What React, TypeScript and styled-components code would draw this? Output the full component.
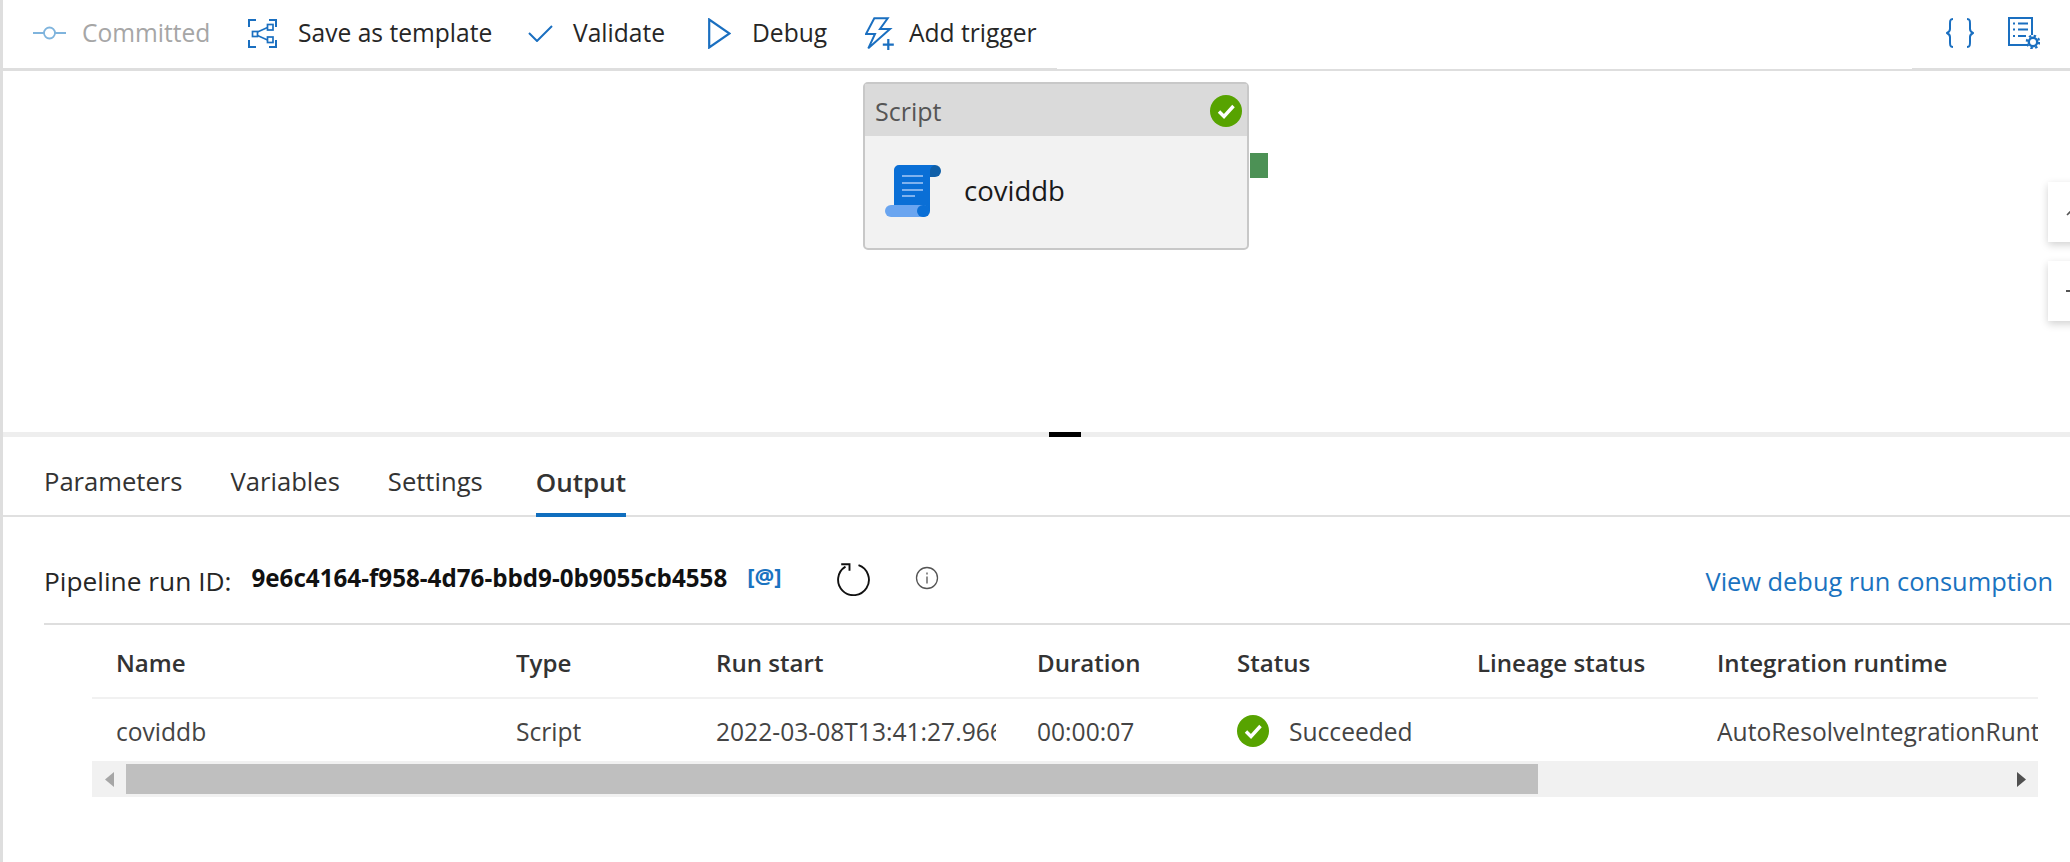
import React from "react";
import styled, { createGlobalStyle } from "styled-components";

const Global = createGlobalStyle`
  html, body { margin: 0; padding: 0; background: #fff; overflow: hidden; }
  * { box-sizing: border-box; }
  body { font-family: "Open Sans", "Noto Sans", "Liberation Sans", sans-serif; color: #262626; }
`;

const Page = styled.div`
  width: 2070px;
  height: 862px;
  display: flex;
  flex-direction: column;
  border-left: 3px solid #dedede;
  background: #fff;
`;

const Toolbar = styled.div`
  height: 71px;
  flex: none;
  display: flex;
  align-items: center;
  padding: 0 0 3px 30px;
  border-bottom: 2px solid #dedede;
  background:
    linear-gradient(#dedede, #dedede) left bottom / 1054px 1px no-repeat,
    linear-gradient(#dedede, #dedede) right bottom / 158px 1px no-repeat;
`;

const ToolButton = styled.div<{ $w: number; $gap: number }>`
  width: ${(p) => p.$w}px;
  flex: none;
  display: flex;
  align-items: center;
  gap: ${(p) => p.$gap}px;
`;

const ToolLabel = styled.span<{ $muted?: boolean }>`
  font-size: 24.6px;
  line-height: 28px;
  white-space: nowrap;
  color: ${(p) => (p.$muted ? "#a6a6a6" : "#262626")};
`;

const ToolSpacer = styled.div`
  flex: 1;
`;

const RightIcons = styled.div`
  display: flex;
  align-items: center;
  gap: 34px;
  padding-right: 30px;
`;

const Canvas = styled.div`
  position: relative;
  height: 361px;
  flex: none;
  overflow: hidden;
`;

const Node = styled.div`
  position: absolute;
  left: 860px;
  top: 11px;
  width: 386px;
  height: 168px;
  border: 2px solid #c8c8c8;
  border-radius: 5px;
  background: #f2f2f2;
  display: flex;
  flex-direction: column;
`;

const NodeHeader = styled.div`
  height: 52px;
  flex: none;
  background: #dadada;
  display: flex;
  align-items: center;
  justify-content: space-between;
  padding: 2px 5px 0 10px;
  font-size: 25px;
  color: #555;
`;

const NodeBody = styled.div`
  flex: 1;
  display: flex;
  align-items: center;
  gap: 23px;
  padding: 0 0 3px 20px;
  font-size: 27.5px;
  color: #1a1a1a;
`;

const Handle = styled.div`
  position: absolute;
  left: 1247px;
  top: 82px;
  width: 18px;
  height: 25px;
  background: #4c9155;
`;

const ZoomButton = styled.div<{ $top: number }>`
  position: absolute;
  left: 2045px;
  top: ${(p) => p.$top}px;
  width: 40px;
  height: 60px;
  background: #fff;
  box-shadow: 0 3px 8px rgba(0, 0, 0, 0.18);
  display: flex;
  align-items: center;
  padding-left: 18px;
`;

const Splitter = styled.div`
  height: 5px;
  flex: none;
  background: #eeeeee;
  display: flex;
  padding-left: 1046px;
`;

const SplitterGrip = styled.div`
  width: 32px;
  height: 5px;
  background: #000;
`;

const Tabs = styled.div`
  height: 80px;
  flex: none;
  display: flex;
  gap: 48px;
  padding-left: 41px;
  border-bottom: 2px solid #e0e0e0;
`;

const Tab = styled.div<{ $active?: boolean }>`
  height: 80px;
  padding-top: 31px;
  margin-left: ${(p) => (p.$active ? 5 : 0)}px;
  font-size: ${(p) => (p.$active ? 26 : 25.6)}px;
  line-height: 28px;
  font-weight: ${(p) => (p.$active ? 600 : 400)};
  color: #333;
  border-bottom: 4px solid ${(p) => (p.$active ? "#106ebe" : "transparent")};
`;

const RunRow = styled.div`
  height: 108px;
  flex: none;
  margin-left: 41px;
  padding: 48px 17px 0 0;
  display: flex;
  align-items: flex-start;
  border-bottom: 2px solid #dedede;
`;

const RunLabel = styled.span`
  font-size: 26.3px;
  line-height: 32px;
  white-space: nowrap;
  margin-right: 20px;
`;

const RunId = styled.span`
  font-size: 24.2px;
  line-height: 24px;
  font-weight: 700;
  color: #111;
  white-space: nowrap;
  margin: 1px 20px 0 0;
`;

const AtLink = styled.span`
  font-size: 22px;
  line-height: 20px;
  font-weight: 700;
  color: #1a73c0;
  width: 90px;
  flex: none;
`;

const RefreshBox = styled.span`
  width: 78px;
  flex: none;
  display: flex;
  margin-top: -3px;
`;

const InfoBox = styled.span`
  display: flex;
  margin-top: 1px;
`;

const LinkSpacer = styled.div`
  flex: 1;
`;

const DebugLink = styled.span`
  font-size: 25.4px;
  line-height: 32px;
  color: #1a73c0;
  white-space: nowrap;
`;

const Table = styled.div`
  margin-left: 89px;
  width: 1946px;
  overflow: hidden;
`;

const Row = styled.div<{ $head?: boolean }>`
  display: grid;
  grid-template-columns: 400px 200px 321px 200px 240px 240px 1fr;
  padding-left: 24px;
  align-items: center;
  height: ${(p) => (p.$head ? 74 : 62)}px;
  padding-top: 2px;
  border-bottom: ${(p) => (p.$head ? "2px solid #f1f1f1" : "0")};
  font-size: ${(p) => (p.$head ? 24.1 : 24.6)}px;
  font-weight: ${(p) => (p.$head ? 600 : 400)};
  color: ${(p) => (p.$head ? "#333" : "#444")};
`;

const Cell = styled.div<{ $clip?: number }>`
  white-space: nowrap;
  overflow: hidden;
  ${(p) => (p.$clip ? `max-width: ${p.$clip}px;` : "")}
`;

const StatusCell = styled.div`
  display: flex;
  align-items: center;
  gap: 20px;
`;

const Scrollbar = styled.div`
  height: 36px;
  background: #f1f1f1;
  display: flex;
  align-items: center;
`;

const ScrollArrow = styled.div<{ $w: number }>`
  width: ${(p) => p.$w}px;
  flex: none;
  display: flex;
  justify-content: center;
`;

const Thumb = styled.div<{ $w: number }>`
  width: ${(p) => p.$w}px;
  height: 30px;
  flex: none;
  background: #bfbfbf;
`;

const Track = styled.div`
  flex: 1;
`;

const BLUE = "#1a6fc0";

const CheckBadge = ({ size }: { size: number }) => (
  <svg width={size} height={size} viewBox="0 0 32 32">
    <circle cx="16" cy="16" r="16" fill="#57a300" />
    <path d="M9 16.5l5 5 9.5-10.5" fill="none" stroke="#fff" strokeWidth="3.4" />
  </svg>
);

const CommitIcon = () => (
  <svg width="33" height="16" viewBox="0 0 33 16" fill="none" stroke="#7fb4dd" strokeWidth="1.8">
    <circle cx="16.5" cy="8" r="5.5" />
    <path d="M0 8h11M22 8h11" />
  </svg>
);

const TemplateIcon = () => (
  <svg width="29" height="29" viewBox="0 0 29 29" fill="none" stroke={BLUE} strokeWidth="2">
    <path d="M8 1H1v7M21 1h7v7M8 28H1v-7M21 28h7v-7" />
    <rect x="19.5" y="5.5" width="5.5" height="5.5" strokeWidth="1.7" />
    <rect x="19.5" y="18" width="5.5" height="5.5" strokeWidth="1.7" />
    <rect x="4.5" y="12.5" width="5" height="5" strokeWidth="1.7" />
    <path d="M9.5 13l10-4.5M9.5 16.5l10 4.5" strokeWidth="1.5" />
  </svg>
);

const CheckIcon = () => (
  <svg width="25" height="17" viewBox="0 0 25 17" fill="none" stroke={BLUE} strokeWidth="2">
    <path d="M1 8l8 8L24 1" />
  </svg>
);

const PlayIcon = () => (
  <svg width="23" height="31" viewBox="0 0 23 31" fill="none" stroke={BLUE} strokeWidth="2.2">
    <path d="M1.2 1.5v28L21.5 15.5z" />
  </svg>
);

const TriggerIcon = () => (
  <svg width="29" height="33" viewBox="0 0 29 33" fill="none" stroke={BLUE} strokeWidth="2">
    <path d="M9.3 1.3h13.4L15 12h10L3.3 31.3 10 17H1z" />
    <path d="M23.3 22v11M17.8 27.7h11" strokeWidth="2.2" />
  </svg>
);

const BracesIcon = () => (
  <svg width="28" height="30" viewBox="0 0 28 30" fill="none" stroke={BLUE} strokeWidth="2">
    <path d="M7 1C4 1 4 3 4 6v5c0 2-1 3-3 4 2 1 3 2 3 4v5c0 3 0 5 3 5" />
    <path d="M21 1c3 0 3 2 3 5v5c0 2 1 3 3 4-2 1-3 2-3 4v5c0 3 0 5-3 5" />
  </svg>
);

const PropertiesIcon = () => (
  <svg width="32" height="32" viewBox="0 0 32 32" fill="none" stroke={BLUE} strokeWidth="2">
    <path d="M19 28H1V1h23v17" />
    <path d="M5 6.5h2M10 6.5h10M5 12.5h2M10 12.5h10M5 19h2M10 19h8" />
    <circle cx="25" cy="25" r="4.2" strokeWidth="2.4" />
    <circle cx="25" cy="25" r="6.2" strokeWidth="2.2" strokeDasharray="2.4 2.46" />
  </svg>
);

const ScriptIcon = () => (
  <svg width="56" height="54" viewBox="0 0 56 54">
    <path d="M40 1h10a6 6 0 0 1 0 12H40z" fill="#0f5fa8" />
    <path d="M14 1h37a6 6 0 0 0-6 6v40H9V6a5 5 0 0 1 5-5z" fill="#0a6fd6" />
    <path d="M17 12h21M17 19h21M17 26h21M17 32h13" stroke="#7fb2ee" strokeWidth="2" />
    <rect x="0" y="41" width="44" height="12" rx="6" fill="#6aa5f0" />
    <path d="M38 41h1a6 6 0 0 1 6 6 6 6 0 0 1-6 6h-1a6 6 0 0 1 0-12z" fill="#0a6fd6" />
  </svg>
);

const RefreshIcon = () => (
  <svg width="33" height="34" viewBox="0 0 33 34" fill="none" stroke="#111" strokeWidth="1.9">
    <path d="M21.5 3.2A15.4 15.4 0 1 1 8.5 4.6" />
    <path d="M4.2 2.2h8.3v6.6" />
  </svg>
);

const InfoIcon = () => (
  <svg width="24" height="24" viewBox="0 0 24 24" fill="none" stroke="#555" strokeWidth="1.3">
    <circle cx="12" cy="12" r="10.5" />
    <path d="M12 10.5v7M12 6.5v2" />
  </svg>
);

const ArrowIcon = ({ left, color }: { left?: boolean; color: string }) => (
  <svg width="9" height="15" viewBox="0 0 9 15">
    <path d={left ? "M9 0v15L0 7.5z" : "M0 0v15l9-7.5z"} fill={color} />
  </svg>
);

export default function App() {
  return (
    <Page>
      <Global />
      <Toolbar>
        <ToolButton $w={215} $gap={16}>
          <CommitIcon />
          <ToolLabel $muted>Committed</ToolLabel>
        </ToolButton>
        <ToolButton $w={280} $gap={21}>
          <TemplateIcon />
          <ToolLabel>Save as template</ToolLabel>
        </ToolButton>
        <ToolButton $w={180} $gap={20}>
          <CheckIcon />
          <ToolLabel>Validate</ToolLabel>
        </ToolButton>
        <ToolButton $w={157} $gap={21}>
          <PlayIcon />
          <ToolLabel>Debug</ToolLabel>
        </ToolButton>
        <ToolButton $w={200} $gap={15}>
          <TriggerIcon />
          <ToolLabel>Add trigger</ToolLabel>
        </ToolButton>
        <ToolSpacer />
        <RightIcons>
          <BracesIcon />
          <PropertiesIcon />
        </RightIcons>
      </Toolbar>
      <Canvas>
        <Node>
          <NodeHeader>
            <span>Script</span>
            <CheckBadge size={32} />
          </NodeHeader>
          <NodeBody>
            <ScriptIcon />
            <span>coviddb</span>
          </NodeBody>
        </Node>
        <Handle />
        <ZoomButton $top={111}>
          <svg width="12" height="12" viewBox="0 0 12 12" fill="none" stroke="#555" strokeWidth="1.6">
            <path d="M1 9l5-5 5 5" />
          </svg>
        </ZoomButton>
        <ZoomButton $top={190}>
          <svg width="12" height="4" viewBox="0 0 12 4" stroke="#555" strokeWidth="2">
            <path d="M0 2h12" />
          </svg>
        </ZoomButton>
      </Canvas>
      <Splitter>
        <SplitterGrip />
      </Splitter>
      <Tabs>
        <Tab>Parameters</Tab>
        <Tab>Variables</Tab>
        <Tab>Settings</Tab>
        <Tab $active>Output</Tab>
      </Tabs>
      <RunRow>
        <RunLabel>Pipeline run ID:</RunLabel>
        <RunId>9e6c4164-f958-4d76-bbd9-0b9055cb4558</RunId>
        <AtLink>[@]</AtLink>
        <RefreshBox>
          <RefreshIcon />
        </RefreshBox>
        <InfoBox>
          <InfoIcon />
        </InfoBox>
        <LinkSpacer />
        <DebugLink>View debug run consumption</DebugLink>
      </RunRow>
      <Table>
        <Row $head>
          <Cell>Name</Cell>
          <Cell>Type</Cell>
          <Cell>Run start</Cell>
          <Cell>Duration</Cell>
          <Cell>Status</Cell>
          <Cell>Lineage status</Cell>
          <Cell>Integration runtime</Cell>
        </Row>
        <Row>
          <Cell>coviddb</Cell>
          <Cell>Script</Cell>
          <Cell $clip={280}>2022-03-08T13:41:27.966Z</Cell>
          <Cell>00:00:07</Cell>
          <StatusCell>
            <CheckBadge size={32} />
            <span>Succeeded</span>
          </StatusCell>
          <Cell />
          <Cell>AutoResolveIntegrationRuntime (East US)</Cell>
        </Row>
        <Scrollbar>
          <ScrollArrow $w={34}>
            <ArrowIcon left color="#a6a6a6" />
          </ScrollArrow>
          <Thumb $w={1412} />
          <Track />
          <ScrollArrow $w={34}>
            <ArrowIcon color="#505050" />
          </ScrollArrow>
        </Scrollbar>
      </Table>
    </Page>
  );
}
